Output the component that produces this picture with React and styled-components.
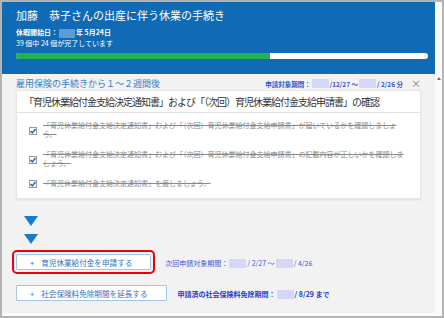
import React from "react";
import styled, { createGlobalStyle } from "styled-components";

const GlobalStyle = createGlobalStyle`
  body {
    margin: 0;
    font-family: "Noto Sans CJK JP", "Noto Sans", sans-serif;
  }
`;

const Frame = styled.div`
  width: 444px;
  height: 318px;
  box-sizing: border-box;
  border: 2px solid #b4b4b4;
  background: #fafafa;
  display: flex;
  flex-direction: column;
  overflow: hidden;
`;

const Header = styled.header`
  background: #106ab4;
  margin-right: 7px;
  padding: 6px 7px 15px 14px;
  color: #fff;
`;

const Title = styled.h1`
  margin: 0;
  font-size: 11px;
  line-height: 14px;
  font-weight: normal;
  white-space: nowrap;
`;

const Meta = styled.div`
  font-size: 7px;
  line-height: 11px;
  font-weight: ${(p) => (p.$bold ? "bold" : "normal")};
  margin-top: ${(p) => (p.$first ? "5px" : "0")};
  white-space: nowrap;
`;

const Progress = styled.div`
  height: 6px;
  margin-top: 4px;
  background: #fff;
  border-radius: 3px;
  overflow: hidden;
`;

const ProgressFill = styled.div`
  height: 100%;
  background: #22b14c;
`;

const Body = styled.div`
  flex: 1;
  display: flex;
  padding-bottom: 3px;
  min-height: 0;
`;

const Content = styled.main`
  flex: 1;
  background: #f2f2f2;
  display: flex;
  flex-direction: column;
`;

const Scrollbar = styled.div`
  width: 7px;
  display: flex;
  justify-content: center;
  padding-top: 3px;
`;

const ScrollArrow = styled.div`
  width: 0;
  height: 0;
  border-left: 2.5px solid transparent;
  border-right: 2.5px solid transparent;
  border-bottom: 3px solid #707070;
`;

const SectionRow = styled.div`
  display: flex;
  align-items: center;
  justify-content: space-between;
  padding: 4px 14px 0;
  height: 11px;
`;

const SectionTitle = styled.h2`
  margin: 0;
  font-size: 9px;
  line-height: 11px;
  font-weight: normal;
  color: #3a7cc3;
  white-space: nowrap;
`;

const Period = styled.div`
  display: flex;
  align-items: center;
  font-size: 6.5px;
  font-weight: bold;
  color: #3552d0;
  white-space: nowrap;
`;

const Close = styled.span`
  margin-left: 8px;
  font-size: 10px;
  line-height: 11px;
  color: #a3a3a3;
`;

const Blur = styled.span`
  display: inline-block;
  width: ${(p) => p.$w || 17}px;
  height: 9px;
  vertical-align: middle;
  background: ${(p) => p.$tone || "#d6d6f6"};
  margin: 0 1px;
`;

const Card = styled.section`
  margin: 1px 14px 0;
  background: #fff;
  border: 1px solid #e6e6e6;
  box-shadow: 0 1px 2px rgba(0, 0, 0, 0.08);
`;

const CardHead = styled.div`
  height: 21px;
  line-height: 21px;
  padding: 0 7px;
  font-size: 10px;
  letter-spacing: -1px;
  color: #333;
  border-bottom: 1px solid #e2e2e2;
  white-space: nowrap;
`;

const CheckList = styled.ul`
  list-style: none;
  margin: 0;
  padding: 8px 0 10px 12px;
  display: flex;
  flex-direction: column;
  gap: 10.5px;
`;

const CheckItem = styled.li`
  display: flex;
  align-items: center;
  gap: 6px;
`;

const CheckBox = styled.svg`
  flex: none;
  margin-top: 2px;
`;

const CheckText = styled.span`
  width: 366px;
  font-size: 7px;
  line-height: 9px;
  color: #8a8a8a;
  text-decoration: line-through;
`;

const Arrows = styled.div`
  display: flex;
  flex-direction: column;
  gap: 8px;
  padding-left: 22px;
  margin-top: 17px;
`;

const Arrow = styled.div`
  width: 0;
  height: 0;
  border-left: 7px solid transparent;
  border-right: 7px solid transparent;
  border-top: 10px solid #1a7cc9;
`;

const ActionRow = styled.div`
  display: flex;
  align-items: center;
  gap: ${(p) => p.$gap}px;
  padding-left: 14px;
  margin-top: ${(p) => p.$top}px;
`;

const ActionButton = styled.button`
  height: 16px;
  box-sizing: border-box;
  display: flex;
  align-items: center;
  gap: 7px;
  padding: 0 18px 0 13px;
  border: 1px solid #9fc5e8;
  border-radius: 1px;
  background: #fff;
  font-family: inherit;
  font-size: 7.6px;
  color: #2f72bd;
  white-space: nowrap;
  outline: ${(p) => (p.$highlight ? "2.5px solid #e60012" : "none")};
  outline-offset: 2px;
`;

const ActionNote = styled.div`
  display: flex;
  align-items: center;
  margin-top: 2px;
  font-size: 7px;
  font-weight: ${(p) => (p.$bold ? "bold" : "normal")};
  color: ${(p) => (p.$bold ? "#2340cf" : "#3b5bd6")};
  white-space: nowrap;
`;

const Check = () => (
  <CheckBox width="8" height="8" viewBox="0 0 8 8">
    <rect x="0.5" y="0.5" width="7" height="7" fill="#fff" stroke="#9a9a9a" />
    <path d="M1.6 4.1 L3.3 5.8 L6.6 2" fill="none" stroke="#1d6fc2" strokeWidth="1.5" />
  </CheckBox>
);

const items = [
  "「育児休業給付金支給決定通知書」および「（次回）育児休業給付金支給申請書」が届いているかを確認しましょう。",
  "「育児休業給付金支給決定通知書」および「（次回）育児休業給付金支給申請書」の記載内容が正しいかを確認しましょう。",
  "「育児休業給付金支給決定通知書」を渡しましょう。",
];

export default function App() {
  const done = 24;
  const total = 39;
  return (
    <>
      <GlobalStyle />
      <Frame>
        <Header>
          <Title>加藤　恭子さんの出産に伴う休業の手続き</Title>
          <Meta $first $bold>
            休暇開始日：<Blur $w={16} $tone="#5d9bd6" />年 5月24日
          </Meta>
          <Meta>
            {total} 個中 {done} 個が完了しています
          </Meta>
          <Progress>
            <ProgressFill style={{ width: `${(done / total) * 100}%` }} />
          </Progress>
        </Header>
        <Body>
          <Content>
            <SectionRow>
              <SectionTitle>雇用保険の手続きから１～２週間後</SectionTitle>
              <Period>
                申請対象期間：<Blur />/12/27 ～ <Blur />/ 2/26 分
                <Close>×</Close>
              </Period>
            </SectionRow>
            <Card>
              <CardHead>
                「育児休業給付金支給決定通知書」および「（次回）育児休業給付金支給申請書」の確認
              </CardHead>
              <CheckList>
                {items.map((t) => (
                  <CheckItem key={t}>
                    <Check />
                    <CheckText>{t}</CheckText>
                  </CheckItem>
                ))}
              </CheckList>
            </Card>
            <Arrows>
              <Arrow />
              <Arrow />
            </Arrows>
            <ActionRow $top={10} $gap={14}>
              <ActionButton $highlight>
                <span>+</span>育児休業給付金を申請する
              </ActionButton>
              <ActionNote>
                次回申請対象期間：<Blur />/ 2/27 ～ <Blur />/ 4/26
              </ActionNote>
            </ActionRow>
            <ActionRow $top={15} $gap={11}>
              <ActionButton>
                <span>+</span>社会保険料免除期間を延長する
              </ActionButton>
              <ActionNote $bold>
                申請済の社会保険料免除期間：<Blur />/ 8/29 まで
              </ActionNote>
            </ActionRow>
          </Content>
          <Scrollbar>
            <ScrollArrow />
          </Scrollbar>
        </Body>
      </Frame>
    </>
  );
}
